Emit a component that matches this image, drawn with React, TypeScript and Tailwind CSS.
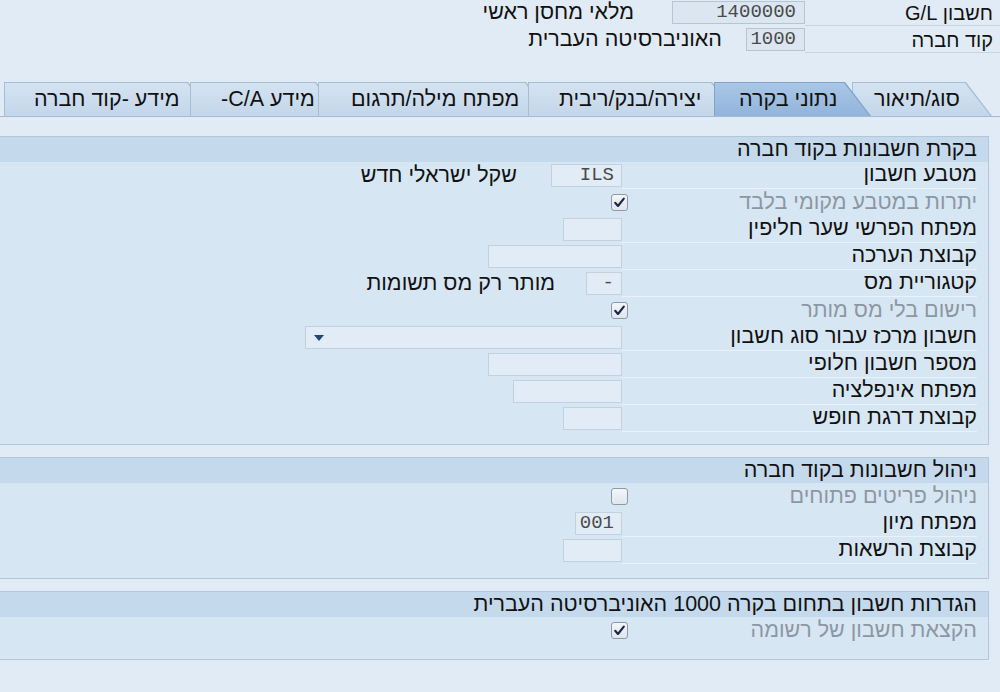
import React from "react";

function Check({ checked }: { checked: boolean }) {
  return (
    <div className="w-[17px] h-[17px] mr-[-6px] rounded-[3px] border border-[#8e9aa8] bg-gradient-to-b from-[#f3f6f9] to-[#dfe6ee] flex items-center justify-center shrink-0">
      {checked && (
        <svg width="13" height="13" viewBox="0 0 13 13">
          <path d="M2.2 6.8 L5 10 L10.8 2.6" fill="none" stroke="#1d2640" strokeWidth="2.1" strokeLinecap="round" strokeLinejoin="round" />
        </svg>
      )}
    </div>
  );
}

function Input({ w, value }: { w: string; value?: string }) {
  return (
    <div
      className={`${w} h-[23px] shrink-0 bg-[#e2ecf6] border border-[#c3d0dd] flex items-center pr-[7px] text-[19px] text-[#4a4a4a] font-['Liberation_Mono',monospace]`}
    >
      {value}
    </div>
  );
}

function Row({
  label,
  disabled,
  children,
}: {
  label: string;
  disabled?: boolean;
  children?: React.ReactNode;
}) {
  return (
    <div className="flex h-[27px] items-center">
      <div
        className={`w-[355px] h-[27px] shrink-0 flex items-center ${
          disabled ? "text-[#8d97a2]" : "text-[#111] border-b border-[#eaf1f8]"
        }`}
      >
        {label}
      </div>
      {children}
    </div>
  );
}

function Panel({ title, children, pb }: { title: string; children: React.ReactNode; pb: string }) {
  return (
    <div className={`mr-[11px] border border-l-0 border-[#b3c7db] bg-[#d7e6f3] ${pb}`}>
      <div className="h-[25px] bg-[#c5d9ec] flex items-center pr-[11px] text-[#111]">{title}</div>
      <div className="pr-[11px]">{children}</div>
    </div>
  );
}

function Tab({
  label,
  w,
  pl,
  overlap,
  z,
  active,
}: {
  label: string;
  w: string;
  pl: string;
  overlap: string;
  z: string;
  active?: boolean;
}) {
  const outerClip = "[clip-path:polygon(0_0,calc(100%-26px)_0,100%_100%,0_100%)]";
  const innerClip = "[clip-path:polygon(0_0,calc(100%-27px)_0,calc(100%-1.5px)_100%,0_100%)]";
  return (
    <div
      className={`${w} ${overlap} ${z} relative h-[34px] shrink-0 pt-px pl-px ${outerClip} ${
        active ? "bg-[#7fa3cb]" : "bg-[#a6bdd6]"
      }`}
    >
      <div
        dir="ltr"
        className={`h-full w-full ${innerClip} ${
          active
            ? "bg-gradient-to-b from-[#a9c6e6] to-[#92b5dc]"
            : "bg-gradient-to-b from-[#d5e3f1] to-[#c3d6ea]"
        } flex items-center justify-start ${pl}`}
      >
        <span dir="rtl" className="text-[#111] whitespace-nowrap">
          {label}
        </span>
      </div>
    </div>
  );
}

function HeaderRow({
  label,
  value,
  inputW,
  desc,
  gap,
}: {
  label: string;
  value: string;
  inputW: string;
  desc: string;
  gap: string;
}) {
  return (
    <div className="flex h-[27px] items-start">
      <div className="w-[195px] h-[25px] shrink-0 flex items-center pr-[7px] border-b border-[#c7d4e1] text-[#111] text-[20px]">
        {label}
      </div>
      <div
        className={`${inputW} h-[23px] shrink-0 bg-[#dbe6f1] border border-[#b6c5d4] flex items-center pr-[8px] text-[19px] text-[#4a4a4a] font-['Liberation_Mono',monospace]`}
      >
        {value}
      </div>
      <div className={`${gap} h-[23px] flex items-center text-[#111] whitespace-nowrap`}>{desc}</div>
    </div>
  );
}

export default function App() {
  return (
    <div
      dir="rtl"
      className="w-[1000px] h-[692px] overflow-hidden bg-[#e1ebf5] font-['Liberation_Sans','DejaVu_Sans',sans-serif] text-[21.5px] leading-none"
    >
      <div className="pt-px">
        <HeaderRow label="חשבון G/L" value="1400000" inputW="w-[133px]" desc="מלאי מחסן ראשי" gap="mr-[38px]" />
        <HeaderRow label="קוד חברה" value="1000" inputW="w-[59px]" desc="האוניברסיטה העברית" gap="mr-[24px]" />
      </div>

      <div className="mt-[27px] flex pr-[8px]">
        <Tab label="סוג/תיאור" w="w-[140px]" pl="pl-[21px]" overlap="" z="z-[60]" />
        <Tab label="נתוני בקרה" w="w-[157px]" pl="pl-[24px]" overlap="mr-[-19px]" z="z-[70]" active />
        <Tab label="יצירה/בנק/ריבית" w="w-[210px]" pl="pl-[30px]" overlap="mr-[-24px]" z="z-[50]" />
        <Tab label="מפתח מילה/תרגום" w="w-[234px]" pl="pl-[32px]" overlap="mr-[-24px]" z="z-[40]" />
        <Tab label="מידע C/A-" w="w-[152px]" pl="pl-[30px]" overlap="mr-[-24px]" z="z-[30]" />
        <Tab label="מידע -קוד חברה" w="w-[210px]" pl="pl-[29px]" overlap="mr-[-24px]" z="z-[20]" />
      </div>
      <div className="h-px bg-[#a4bbd5]" />

      <div className="mt-[19px] flex flex-col gap-[12px]">
        <Panel title="בקרת חשבונות בקוד חברה" pb="pb-[12px]">
          <Row label="מטבע חשבון">
            <Input w="w-[71px]" value="ILS" />
            <div className="mr-[34px] whitespace-nowrap text-[#111]">שקל ישראלי חדש</div>
          </Row>
          <Row label="יתרות במטבע מקומי בלבד" disabled>
            <Check checked />
          </Row>
          <Row label="מפתח הפרשי שער חליפין">
            <Input w="w-[59px]" />
          </Row>
          <Row label="קבוצת הערכה">
            <Input w="w-[134px]" />
          </Row>
          <Row label="קטגוריית מס">
            <Input w="w-[36px]" value="-" />
            <div className="mr-[31px] whitespace-nowrap text-[#111]">מותר רק מס תשומות</div>
          </Row>
          <Row label="רישום בלי מס מותר" disabled>
            <Check checked />
          </Row>
          <Row label="חשבון מרכז עבור סוג חשבון">
            <div className="w-[317px] h-[23px] shrink-0 bg-[#e2ecf6] border border-[#c3d0dd] flex items-center justify-end pl-[8px]">
              <svg width="10" height="6" viewBox="0 0 10 6">
                <polygon points="0,0 10,0 5,6" fill="#23457a" />
              </svg>
            </div>
          </Row>
          <Row label="מספר חשבון חלופי">
            <Input w="w-[134px]" />
          </Row>
          <Row label="מפתח אינפלציה">
            <Input w="w-[109px]" />
          </Row>
          <Row label="קבוצת דרגת חופש">
            <Input w="w-[59px]" />
          </Row>
        </Panel>

        <Panel title="ניהול חשבונות בקוד חברה" pb="pb-[14px]">
          <Row label="ניהול פריטים פתוחים" disabled>
            <Check checked={false} />
          </Row>
          <Row label="מפתח מיון">
            <Input w="w-[47px]" value="001" />
          </Row>
          <Row label="קבוצת הרשאות">
            <Input w="w-[59px]" />
          </Row>
        </Panel>

        <Panel title="הגדרות חשבון בתחום בקרה 1000 האוניברסיטה העברית" pb="pb-[15px]">
          <Row label="הקצאת חשבון של רשומה" disabled>
            <Check checked />
          </Row>
        </Panel>
      </div>
    </div>
  );
}
